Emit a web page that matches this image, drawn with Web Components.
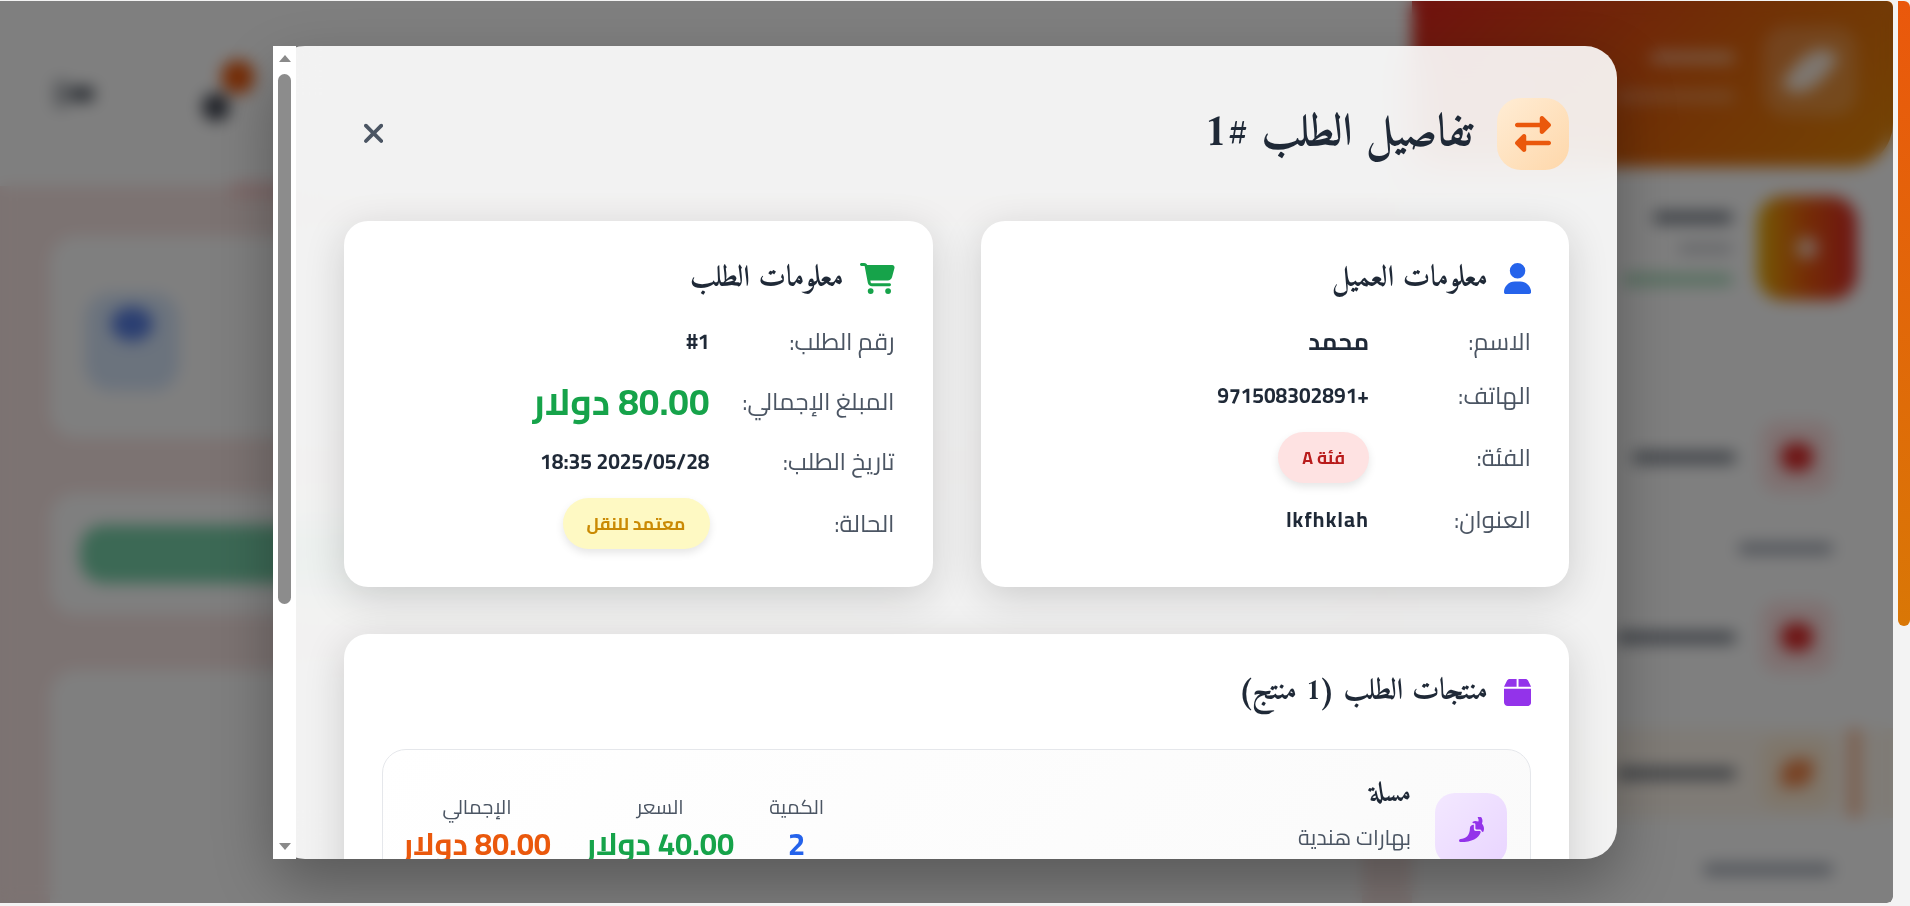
<!DOCTYPE html>
<html lang="ar" dir="rtl">
<head>
<meta charset="utf-8">
<title>تفاصيل الطلب</title>
<style>
  html, body { margin: 0; height: 100%; }
  body { background: #f3f3f3; overflow: hidden; font-family: "Cairo", "Noto Sans", sans-serif; }
</style>
</head>
<body>
<app-page>
  <dash-backdrop></dash-backdrop>
  <order-modal>
    <span slot="title">تفاصيل الطلب #1</span>

    <info-card icon="user" icon-color="#2563eb" label-width="162px">
      <span slot="title">معلومات العميل</span>
      <info-row name><span slot="label">الاسم:</span>محمد</info-row>
      <info-row><span slot="label">الهاتف:</span><bdi dir="ltr">971508302891+</bdi></info-row>
      <info-row><span slot="label">الفئة:</span><status-pill tone="red">فئة A</status-pill></info-row>
      <info-row spaced><span slot="label">العنوان:</span>lkfhklah</info-row>
    </info-card>

    <info-card icon="cart" icon-color="#16a34a" label-width="185px">
      <span slot="title">معلومات الطلب</span>
      <info-row><span slot="label">رقم الطلب:</span>#1</info-row>
      <info-row big><span slot="label">المبلغ الإجمالي:</span>80.00 دولار</info-row>
      <info-row><span slot="label">تاريخ الطلب:</span>2025/05/28 18:35</info-row>
      <info-row><span slot="label">الحالة:</span><status-pill tone="yellow">معتمد للنقل</status-pill></info-row>
    </info-card>

    <product-list slot="wide">
      <span slot="title">منتجات الطلب (1 منتج)</span>
      <product-row>
        <span slot="name">مسلة</span>
        <span slot="sub">بهارات هندية</span>
        <product-stat label="الكمية" color="#2563eb">2</product-stat>
        <product-stat label="السعر" color="#16a34a">40.00 دولار</product-stat>
        <product-stat label="الإجمالي" color="#ea580c">80.00 دولار</product-stat>
      </product-row>
    </product-list>
  </order-modal>
</app-page>

<script>
const ICONS = {
  user: ['0 0 448 512', 'M224 256A128 128 0 1 0 224 0a128 128 0 1 0 0 256zm-45.700 48C79.800 304 0 383.800 0 482.300C0 498.700 13.300 512 29.700 512H418.300c16.400 0 29.700-13.300 29.700-29.700C448 383.800 368.200 304 269.700 304H178.300z'],
  cart: ['0 0 576 512', 'M0 24C0 10.700 10.700 0 24 0H69.500c22 0 41.500 12.800 50.600 32h411c26.300 0 45.500 25 38.600 50.400l-41 152.300c-8.500 31.400-37 53.300-69.500 53.300H170.700l5.400 28.500c2.200 11.300 12.100 19.500 23.600 19.500H488c13.300 0 24 10.700 24 24s-10.700 24-24 24H199.700c-34.600 0-64.300-24.600-70.700-58.500L77.400 54.500c-.7-3.800-4-6.500-7.900-6.500H24C10.700 48 0 37.300 0 24zM128 464a48 48 0 1 1 96 0 48 48 0 1 1 -96 0zm336-48a48 48 0 1 1 0 96 48 48 0 1 1 0-96z'],
  exchange: ['0 0 512 512', 'M32 96l320 0V32c0-12.900 7.800-24.600 19.800-29.600s25.700-2.200 34.900 6.900l96 96c6 6 9.400 14.100 9.400 22.600s-3.400 16.600-9.400 22.600l-96 96c-9.200 9.200-22.900 11.900-34.900 6.900s-19.800-16.600-19.800-29.600V160L32 160c-17.700 0-32-14.300-32-32s14.300-32 32-32zM480 352c17.700 0 32 14.300 32 32s-14.300 32-32 32H160v64c0 12.900-7.800 24.600-19.800 29.600s-25.700 2.200-34.900-6.900l-96-96c-6-6-9.400-14.100-9.400-22.600s3.400-16.600 9.400-22.600l96-96c9.200-9.200 22.900-11.900 34.900-6.900s19.800 16.600 19.800 29.600l0 64H480z'],
  box: ['0 0 448 512', 'M50.700 58.500L0 160H208V32H93.700C75.500 32 58.900 42.300 50.700 58.500zM240 160H448L397.300 58.500C389.100 42.300 372.500 32 354.300 32H240V160zm208 32H0V416c0 35.300 28.700 64 64 64H384c35.300 0 64-28.700 64-64V192z'],
  pepper: ['0 0 512 512', 'M428 3c12-6 26-2 33 9l5 9c19 35 20 76 3 110C496 160 512 198 512 240c0 18-3 36-9 53-6 17-28 16-37 0l-12-24c-4-8-12-13-21-13H360c-13 0-24-11-24-24V152c0-13-11-24-24-24h-17c-21 0-30-24-11-33C304 85 316 80 328 80c24 0 47 5 68 14 8-21 7-44-4-63l-5-9c-6-12-2-26 9-33zM304 160C304 160 304 200 304 240C304 280 336 288 360 288H434L445 310C410 430 260 512 32 512A32 32 0 0 1 32 448C128 448 224 384 224 224C224 195 256 160 304 160Z'],
  times: ['0 0 320 512', 'M310.600 150.600c12.500-12.500 12.500-32.800 0-45.300s-32.800-12.500-45.300 0L160 210.700 54.600 105.400c-12.500-12.500-32.800-12.500-45.300 0s-12.500 32.800 0 45.300L114.700 256 9.400 361.400c-12.500 12.500-12.500 32.800 0 45.300s32.800 12.500 45.300 0L160 301.300 265.400 406.600c12.500 12.500 32.800 12.500 45.300 0s12.500-32.800 0-45.300L205.300 256 310.600 150.600z']
};

class FaIcon extends HTMLElement {
  constructor() {
    super();
    this.attachShadow({ mode: 'open' });
  }

  connectedCallback() {
    const [box, d] = ICONS[this.getAttribute('name')];
    const size = this.getAttribute('size') || '24';
    this.shadowRoot.innerHTML = `
      <style>
        :host { display: inline-flex; flex: none; line-height: 0; }
        svg { height: ${size}px; width: auto; fill: currentColor; display: block; }
      </style>
      <svg viewBox="${box}" aria-hidden="true"><path d="${d}"></path></svg>
    `;
  }
}

// the page behind the dialog: only blocks, the overlay blurs them anyway
class DashBackdrop extends HTMLElement {
  constructor() {
    super();
    this.attachShadow({ mode: 'open' });
    this.shadowRoot.innerHTML = `
      <style>
        :host { display: flex; height: 100%; background: #fff; }
        .side { width: 481px; flex: none; background: #fff; display: flex; flex-direction: column; overflow: hidden; }
        .side > * { flex: none; }
        .brand {
          height: 166px; border-bottom-right-radius: 44px;
          background: linear-gradient(135deg, #e0251f, #e2620c 55%, #e88a08);
          display: flex; align-items: center; padding: 0 36px; gap: 28px;
        }
        .logo { width: 94px; height: 90px; border-radius: 24px; background: rgba(255,255,255,.2); display: flex; align-items: center; justify-content: center; flex: none; margin-top: -26px; }
        .logo i { width: 32px; height: 56px; background: #fff; border-radius: 70% 10% 70% 10%; transform: rotate(35deg); opacity: .85; }
        .bars { display: flex; flex-direction: column; gap: 28px; align-items: flex-start; margin-top: -14px; }
        .bar { display: block; height: 11px; border-radius: 6px; }
        .user { display: flex; gap: 24px; padding: 29px 36px 0; align-items: center; }
        .avatar { width: 100px; height: 104px; border-radius: 26px; background: linear-gradient(90deg, #eab308, #ea580c 50%, #dc2626); display: flex; align-items: center; justify-content: center; flex: none; }
        .avatar i { width: 22px; height: 22px; background: #fff; border-radius: 50%; opacity: .7; }
        .group { padding: 121px 60px 0 0; }
        .item { display: flex; align-items: center; gap: 25px; height: 72px; }
        .ico { width: 72px; height: 72px; border-radius: 18px; background: #fee2e2; display: flex; align-items: center; justify-content: center; flex: none; }
        .ico i { width: 32px; height: 28px; border-radius: 12px; background: #dc2626; }
        .label { height: 11px; border-radius: 6px; background: #9ca3af; margin: 50px 0 47px; }
        .active { position: relative; height: 90px; margin: 55px -60px 0 0; padding-right: 60px; background: #fff7ed; }
        .active::before { content: ""; position: absolute; right: 33px; top: 0; bottom: 0; width: 11px; border-radius: 5px; background: #ea580c; opacity: .4; }
        .active .ico { background: #ffedd5; }
        .active .ico i { background: #ea580c; opacity: .7; border-radius: 50% 10%; }
        .main { flex: 1; display: flex; flex-direction: column; min-width: 0; }
        .top { position: relative; height: 185px; background: #fff; flex: none; display: flex; align-items: center; gap: 92px; padding: 0 54px; justify-content: flex-end; }
        .top .flag { position: absolute; left: 230px; bottom: -10px; width: 60px; height: 14px; border-radius: 8px; background: #fca5a5; opacity: .4; }
        .content { flex: 1; background: #f9e6e4; padding: 50px 50px 0; display: flex; flex-direction: column; gap: 55px; }
        .card { background: #fff; border-radius: 26px; }
        .stat { height: 202px; box-sizing: border-box; padding: 57px 35px; display: flex; }
        .stat i { display: block; width: 94px; height: 98px; border-radius: 26px; background: #d6e6fb; position: relative; margin-right: auto; }
        .stat i::after { content: ""; position: absolute; left: 26px; top: 14px; width: 42px; height: 34px; border-radius: 50%; background: #1d4ed8; opacity: .7; }
        .act { height: 122px; box-sizing: border-box; padding: 32px 30px; display: flex; }
        .act i { display: block; width: 800px; height: 58px; border-radius: 24px; background: #78d2aa; margin-right: auto; }
        .rest { flex: 1; border-radius: 26px 26px 0 0; }
      </style>
      <div class="side">
        <div class="brand">
          <div class="logo"><i></i></div>
          <div class="bars">
            <span class="bar" style="width:85px;background:#fff;opacity:.5"></span>
            <span class="bar" style="width:120px;background:#fff;opacity:.28"></span>
          </div>
        </div>
        <div class="user">
          <div class="avatar"><i></i></div>
          <div class="bars" style="margin:0;gap:20px">
            <span class="bar" style="width:80px;background:#374151;opacity:.75"></span>
            <span class="bar" style="width:55px;background:#6b7280;opacity:.35"></span>
            <span class="bar" style="width:110px;background:#16a34a;opacity:.4"></span>
          </div>
        </div>
        <div class="group">
          <div class="item"><div class="ico"><i></i></div><span class="bar" style="width:104px;background:#4b5563;opacity:.8"></span></div>
          <div class="label" style="width:95px"></div>
          <div class="item"><div class="ico"><i></i></div><span class="bar" style="width:120px;background:#4b5563;opacity:.8"></span></div>
          <div class="item active"><div class="ico"><i></i></div><span class="bar" style="width:120px;background:#4b5563;opacity:.8"></span></div>
          <div class="label" style="width:130px;margin-top:46px"></div>
        </div>
      </div>
      <div class="main">
        <div class="top">
          <span class="flag"></span>
          <svg width="60" height="70" viewBox="0 0 60 70"><circle cx="22" cy="48" r="14" fill="#111827" opacity=".8"/><circle cx="44" cy="18" r="17" fill="#ea580c"/></svg>
          <svg width="48" height="40" viewBox="0 0 48 40"><rect x="0" y="6" width="14" height="28" rx="3" fill="#374151" opacity=".4"/><rect x="16" y="13" width="24" height="14" rx="4" fill="#1f2937" opacity=".8"/></svg>
        </div>
        <div class="content">
          <div class="card stat"><i></i></div>
          <div class="card act"><i></i></div>
          <div class="card rest"></div>
        </div>
      </div>
    `;
  }
}

class AppPage extends HTMLElement {
  constructor() {
    super();
    this.attachShadow({ mode: 'open' });
    this.shadowRoot.innerHTML = `
      <style>
        :host { display: grid; grid-template-columns: 17px 1fr; height: 906px; box-sizing: border-box; padding: 1px 0 3px; }
        .bar { background: #f3f3f3; }
        .thumb { width: 12px; height: 625px; margin-left: 5px; border-radius: 0 6px 6px 6px; background: linear-gradient(180deg, #ea580c, #d97706); }
        .stage { position: relative; overflow: hidden; border-radius: 0 6px 6px 0; min-width: 0; }
      </style>
      <div class="bar"><div class="thumb"></div></div>
      <div class="stage">
        <slot></slot>
      </div>
    `;
  }
}

class OrderModal extends HTMLElement {
  constructor() {
    super();
    this.attachShadow({ mode: 'open' });
    this.shadowRoot.innerHTML = `
      <style>
        :host { position: absolute; inset: 0; display: block; }
        .overlay { position: absolute; inset: 0; background: rgba(0,0,0,.5); backdrop-filter: blur(8px); }
        .dialog {
          position: absolute; top: 45px; left: 273px; width: 1344px; height: 813px;
          border-radius: 32px; box-shadow: 0 25px 60px rgba(0,0,0,.3);
          background: rgba(255,255,255,.9); backdrop-filter: blur(20px);
          overflow: hidden;
        }
        .inner { box-sizing: border-box; margin-left: 23px; padding: 52px 48px 0; }
        header { display: flex; align-items: center; gap: 24px; height: 72px; margin-bottom: 51px; }
        .badge {
          width: 72px; height: 72px; border-radius: 24px; flex: none; color: #ea580c;
          background: linear-gradient(135deg, #ffedd5, #fed7aa);
          display: flex; align-items: center; justify-content: center;
        }
        h2 { margin: 0; flex: 1; font: 700 45px "Amiri", "Liberation Serif", serif; color: #1f2937; }
        .close { color: #4b5563; margin: 0 0 2px 20px; }
        .grid { display: grid; grid-template-columns: 1fr 1fr; gap: 48px; }
        ::slotted([slot="wide"]) { margin-top: 47px; }
        .scrollbar { position: absolute; left: 273px; top: 45px; width: 23px; height: 813px; background: #fff; }
        .scrollbar .up, .scrollbar .down { position: absolute; left: 6px; width: 0; height: 0; border: 6px solid transparent; }
        .scrollbar .up { top: 9px; border-bottom: 7px solid #8a8a8a; border-top: 0; }
        .scrollbar .down { bottom: 9px; border-top: 7px solid #8a8a8a; border-bottom: 0; }
        .scrollbar .thumb { position: absolute; left: 5px; top: 28px; width: 13px; height: 530px; border-radius: 7px; background: #8c8c8c; }
      </style>
      <div class="overlay"></div>
      <div class="dialog">
        <div class="inner">
          <header>
            <div class="badge"><fa-icon name="exchange" size="36"></fa-icon></div>
            <h2><slot name="title"></slot></h2>
            <fa-icon class="close" name="times" size="30.700"></fa-icon>
          </header>
          <div class="grid"><slot></slot></div>
          <slot name="wide"></slot>
        </div>
      </div>
      <div class="scrollbar"><div class="up"></div><div class="thumb"></div><div class="down"></div></div>
    `;
  }
}

class InfoCard extends HTMLElement {
  constructor() {
    super();
    this.attachShadow({ mode: 'open' });
  }

  connectedCallback() {
    this.style.setProperty('--label-w', this.getAttribute('label-width'));
    this.shadowRoot.innerHTML = `
      <style>
        :host {
          display: block; box-sizing: border-box; height: 366px; padding: 38px;
          background: #fff; border-radius: 24px; box-shadow: 0 10px 40px rgba(0,0,0,.16);
        }
        .head { display: flex; align-items: center; gap: 16px; height: 39px; margin-bottom: 26px; color: #1f2937; font: 700 29.600px "Amiri", "Liberation Serif", serif; }
        .icon { display: flex; color: ${this.getAttribute('icon-color')}; }
        .rows { display: flex; flex-direction: column; gap: 19px; }
      </style>
      <div class="head"><span class="icon"><fa-icon name="${this.getAttribute('icon')}" size="31"></fa-icon></span><slot name="title"></slot></div>
      <div class="rows"><slot></slot></div>
    `;
  }
}

class InfoRow extends HTMLElement {
  constructor() {
    super();
    this.attachShadow({ mode: 'open' });
    this.shadowRoot.innerHTML = `
      <style>
        :host { display: flex; align-items: center; min-height: 35px; line-height: 35px; color: #1f2937; font-weight: 700; font-size: 21px; }
        :host([name]) { font-size: 24px; }
        :host([spaced]) { letter-spacing: 1.2px; }
        :host([big]) { font-size: 37px; color: #16a34a; line-height: 47px; }
        .label { width: var(--label-w); flex: none; color: #4b5563; font-weight: 400; font-size: 24px; line-height: 35px; letter-spacing: 0; }
      </style>
      <div class="label"><slot name="label"></slot></div>
      <div><slot></slot></div>
    `;
  }
}

class StatusPill extends HTMLElement {
  constructor() {
    super();
    this.attachShadow({ mode: 'open' });
    this.shadowRoot.innerHTML = `
      <style>
        :host {
          display: inline-flex; align-items: center; height: 51px; padding: 0 24px; border-radius: 26px;
          font-size: 17.600px; font-weight: 700; box-shadow: 0 4px 8px rgba(0,0,0,.1);
        }
        :host([tone="red"]) { background: #fee2e2; color: #b91c1c; }
        :host([tone="yellow"]) { background: #fef9c3; color: #ca8a04; }
      </style>
      <slot></slot>
    `;
  }
}

class ProductList extends HTMLElement {
  constructor() {
    super();
    this.attachShadow({ mode: 'open' });
    this.shadowRoot.innerHTML = `
      <style>
        :host { display: block; padding: 38px; background: #fff; border-radius: 24px; box-shadow: 0 10px 40px rgba(0,0,0,.16); }
        .head { display: flex; align-items: center; gap: 16px; height: 40px; margin-bottom: 37px; color: #1f2937; font: 700 29.600px "Amiri", "Liberation Serif", serif; }
        .icon { display: flex; color: #9333ea; }
      </style>
      <div class="head"><span class="icon"><fa-icon name="box" size="31"></fa-icon></span><slot name="title"></slot></div>
      <slot></slot>
    `;
  }
}

class ProductRow extends HTMLElement {
  constructor() {
    super();
    this.attachShadow({ mode: 'open' });
    this.shadowRoot.innerHTML = `
      <style>
        :host { display: flex; border: 1px solid #e5e7eb; border-radius: 24px; padding: 28px 23px 38px 20px; background: linear-gradient(135deg, #fff, #fafafa); }
        .thumb {
          width: 72px; height: 72px; margin-top: 15px; border-radius: 20px; flex: none; color: #9333ea;
          background: linear-gradient(135deg, #f3e8ff, #e9d5ff);
          display: flex; align-items: center; justify-content: center;
        }
        .text { margin: 1px 24px 0 0; flex: 1; }
        .name { font: 700 27px/32px "Amiri", "Liberation Serif", serif; color: #1f2937; }
        .sub { margin-top: 11px; font-size: 21.600px; line-height: 30px; color: #4b5563; }
        .stats { display: flex; gap: 35px; margin-top: 14px; }
      </style>
      <div class="thumb"><fa-icon name="pepper" size="25"></fa-icon></div>
      <div class="text">
        <div class="name"><slot name="name"></slot></div>
        <div class="sub"><slot name="sub"></slot></div>
      </div>
      <div class="stats"><slot></slot></div>
    `;
  }
}

class ProductStat extends HTMLElement {
  constructor() {
    super();
    this.attachShadow({ mode: 'open' });
  }

  connectedCallback() {
    this.shadowRoot.innerHTML = `
      <style>
        :host { display: block; text-align: center; }
        .label { font-size: 20px; line-height: 30px; color: #4b5563; }
        .value { margin-top: 4px; font-size: 31px; line-height: 36px; font-weight: 700; color: ${this.getAttribute('color')}; }
      </style>
      <div class="label">${this.getAttribute('label')}</div>
      <div class="value"><slot></slot></div>
    `;
  }
}

customElements.define('fa-icon', FaIcon);
customElements.define('dash-backdrop', DashBackdrop);
customElements.define('app-page', AppPage);
customElements.define('order-modal', OrderModal);
customElements.define('info-card', InfoCard);
customElements.define('info-row', InfoRow);
customElements.define('status-pill', StatusPill);
customElements.define('product-list', ProductList);
customElements.define('product-row', ProductRow);
customElements.define('product-stat', ProductStat);
</script>
</body>
</html>
